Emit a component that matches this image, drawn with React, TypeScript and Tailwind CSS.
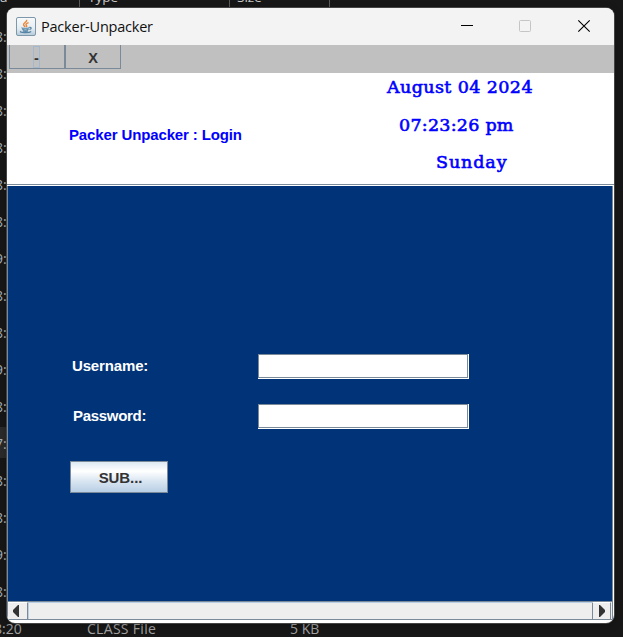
import React from "react";

const times = ["8:", "8:", "8:", "8:", "8:", "8:", "9:", "8:", "8:", "9:", "8:", "7:", "8:", "8:", "9:", "8:"];

const ui = "font-['Open_Sans','Noto_Sans',sans-serif]";
const arial = "font-['Liberation_Sans',Arial,sans-serif] font-bold";

function FileList() {
  return (
    <div className={`h-[637px] w-[623px] overflow-hidden bg-[#171717] text-[14px] text-[#a3a3a3] ${ui}`}>
      <div className="flex h-[18px] text-[13.5px] leading-[18px] text-[#c8c8c8]">
        <div className="-mt-[12px] h-[20px] w-[80px] border-r border-[#5a5a5a]">a</div>
        <div className="-mt-[12px] h-[20px] w-[150px] border-r border-[#5a5a5a] pl-2">Type</div>
        <div className="-mt-[12px] h-[20px] w-[100px] border-r border-[#5a5a5a] pl-[7px]">Size</div>
      </div>
      {times.map((t, i) => (
        <div key={i} className="h-[37px] w-[300px] pb-[4px] pt-[2px]">
          <div className={i === 11 ? "h-[31px] bg-[#2b2b2b] leading-[33px]" : "h-[31px] leading-[33px]"}>
            <span className="-ml-[5px] inline-block text-[#a8b0b8]">{t}</span>
          </div>
        </div>
      ))}
      <div className="flex h-[27px] pt-[10px] leading-[18px]">
        <div className="-ml-[6px] w-[93px]">8:20</div>
        <div className="w-[203px] tracking-[0.3px]">CLASS File</div>
        <div>5 KB</div>
      </div>
    </div>
  );
}

function JavaIcon() {
  return (
    <svg width="20" height="20" viewBox="0 0 20 20" fill="none">
      <defs>
        <linearGradient id="tile" x1="0" y1="0" x2="0" y2="1">
          <stop stopColor="#f8fafb" />
          <stop offset="0.6" stopColor="#e5edf1" />
          <stop offset="1" stopColor="#b5cad8" />
        </linearGradient>
      </defs>
      <rect x="0.5" y="0.5" width="19" height="18" rx="1.5" fill="url(#tile)" stroke="#7d97ab" />
      <path d="M10.6 2.8c1.1 2.2-3.6 3-3 5 .2.8 1.1 1.3 1.5 2.2M12.6 5.6c-2.3.8-3.2 1.8-2.2 2.9.5.6.3 1.1-.2 1.5" stroke="#ed8536" strokeWidth="1.4" />
      <path d="M6 10.6c-1 .8 5.6 1 7.3.1M6.3 12.4c1.7.6 4.6.6 6.3 0M13.4 10.4c2.6-.5 2.2 1.8 0 2.1M7 14c1.4.5 3.6.5 5 0M4.8 14.3c-2.6 1.3 8.3 2.1 10.4.2" stroke="#5684a5" strokeWidth="1.15" />
    </svg>
  );
}

function TitleBar() {
  return (
    <div className="flex h-[37px] items-center bg-[#f3f3f3] pl-[9px]">
      <JavaIcon />
      <div className={`ml-[5px] w-[413px] shrink-0 whitespace-nowrap text-[14.5px] tracking-[-0.22px] text-[#111] ${ui}`}>Packer-Unpacker</div>
      <svg width="140" height="37" viewBox="454 8 140 37" fill="none" className="shrink-0">
        <path d="M461 25.5h12" stroke="#000" />
        <rect x="519.5" y="20.5" width="11" height="11" rx="1" stroke="#c5c5c5" />
        <path d="M578.3 20.3l11.4 11.4M589.7 20.3l-11.4 11.4" stroke="#000" strokeWidth="1.15" />
      </svg>
    </div>
  );
}

function MenuBar() {
  return (
    <div className={`flex h-[28px] bg-[#c0c0c0] pl-[2px] text-[14.5px] text-[#333] ${arial}`}>
      <button className="flex h-[24px] w-[56px] items-center justify-center border border-t-0 border-[#7a8a99] pr-px">
        <span className="flex h-[22px] w-[7px] items-center justify-center border border-[#a3b8cc] pt-[4px]">-</span>
      </button>
      <button className="flex h-[24px] w-[56px] items-center justify-center border border-t-0 border-[#7a8a99] pt-[4px]">X</button>
    </div>
  );
}

const dateClass = "whitespace-nowrap text-[#0000ff] font-['DejaVu_Serif',serif] text-[17.5px] leading-[37.5px] [-webkit-text-stroke:0.6px_#0000ff]";

function Header() {
  return (
    <div className="flex h-[113px] border-b border-white bg-white">
      <div className="flex h-[112px] w-full border-b border-[#7a8a99]">
        <div className={`w-[380px] pl-[62px] pt-[52px] text-[15px] leading-[20px] tracking-[-0.13px] text-[#0000ff] ${arial}`}>Packer Unpacker : Login</div>
        <div className="-mt-[4px]">
          <div className={`${dateClass} tracking-[0.4px]`}>August 04 2024</div>
          <div className={`${dateClass} pl-[12px] tracking-[0.25px]`}>07:23:26 pm</div>
          <div className={`${dateClass} pl-[49px] tracking-[0.9px]`}>Sunday</div>
        </div>
      </div>
    </div>
  );
}

function Field() {
  return (
    <div className="h-[25px] w-[211px] border-b-2 border-r-2 border-white bg-white shadow-[inset_1px_1px_0_#7a8a99]">
      <div className="h-[24px] w-[210px] border border-[#7a8a99]" />
    </div>
  );
}

function Login() {
  return (
    <div className="h-[415px] border-l border-[#7a8a99] bg-[#003377] pt-[168px]">
      <div className={`flex h-[50px] text-[15px] tracking-[-0.15px] text-white ${arial}`}>
        <div className="w-[250px] pl-[64px] leading-[24px]">Username:</div>
        <Field />
      </div>
      <div className={`flex h-[50px] text-[15px] tracking-[-0.3px] text-white ${arial}`}>
        <div className="w-[250px] pl-[65px] leading-[24px]">Password:</div>
        <Field />
      </div>
      <button className={`ml-[62px] mt-[7px] flex h-[32px] w-[98px] items-center justify-center border border-[#7a8a99] bg-[linear-gradient(#dde8f3_0%,#ffffff_30%,#dde8f3_60%,#b8cfe5_100%)] pl-[3px] pt-[2px] text-[15px] tracking-[-0.1px] text-[#333] ${arial}`}>
        SUB...
      </button>
    </div>
  );
}

function ScrollBar() {
  return (
    <div className="flex h-[19px] border-y border-l border-[#7a8a99] bg-[#eee]">
      <div className="flex w-[20px] items-center border-r border-t border-r-[#7a8a99] border-t-white pl-[5px]">
        <svg width="6" height="12"><path d="M6 0v12H5L0 7V5L5 0z" fill="#333" /></svg>
      </div>
      <div className="flex-1 border-l border-t border-[#b8cfe5]" />
      <div className="mr-[1px] flex w-[19px] items-center border-x border-t border-x-[#7a8a99] border-t-white pl-[6px]">
        <svg width="6" height="12"><path d="M0 0v12h1L6 7V5L1 0z" fill="#333" /></svg>
      </div>
    </div>
  );
}

export default function App() {
  return (
    <div className="relative h-[637px] w-[623px] overflow-hidden">
      <FileList />
      <div className="absolute left-[7px] top-[8px] h-[615px] w-[607px] overflow-hidden rounded-[8px] bg-white shadow-[0_0_0_1px_#444,0_2px_8px_rgba(0,0,0,0.3)]">
        <TitleBar />
        <MenuBar />
        <Header />
        <div className="mr-[1px] border-r border-[#7a8a99]">
          <Login />
          <ScrollBar />
        </div>
      </div>
    </div>
  );
}
